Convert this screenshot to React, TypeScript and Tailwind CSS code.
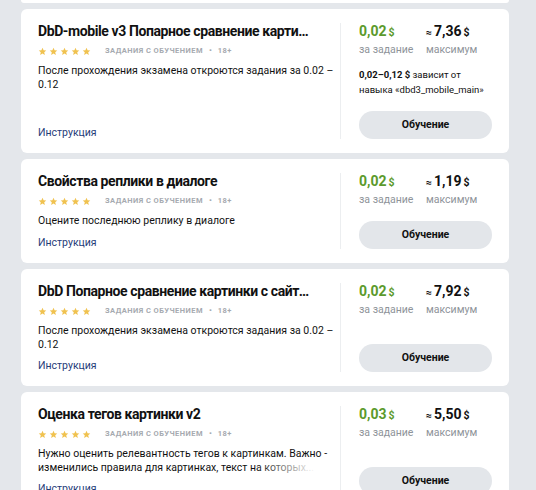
import React from "react";

type Task = {
  title: string;
  desc: string[];
  fade?: boolean;
  price: string;
  max: string;
  note?: boolean;
};

const tasks: Task[] = [
  {
    title: "DbD-mobile v3 Попарное сравнение картинок",
    desc: ["После прохождения экзамена откроются задания за 0.02 –", "0.12"],
    price: "0,02",
    max: "7,36",
    note: true,
  },
  {
    title: "Свойства реплики в диалоге",
    desc: ["Оцените последнюю реплику в диалоге"],
    price: "0,02",
    max: "1,19",
  },
  {
    title: "DbD Попарное сравнение картинки с сайтом",
    desc: ["После прохождения экзамена откроются задания за 0.02 –", "0.12"],
    price: "0,02",
    max: "7,92",
  },
  {
    title: "Оценка тегов картинки v2",
    desc: ["Нужно оценить релевантность тегов к картинкам. Важно -", "изменились правила для картинках, текст на которых..."],
    fade: true,
    price: "0,03",
    max: "5,50",
  },
];

function Stars() {
  return (
    <div className="flex gap-[2px]">
      {[0, 1, 2, 3, 4].map((i) => (
        <svg key={i} width="9" height="9" viewBox="0 0 24 24">
          <path
            d="M12 2l2.9 6.9 7.1.6-5.4 4.7 1.6 7L12 17.5 5.8 21.2l1.6-7L2 9.5l7.1-.6z"
            fill="#f0c24f"
          />
        </svg>
      ))}
    </div>
  );
}

function Card({ t }: { t: Task }) {
  return (
    <div className="flex bg-white rounded-[6px]">
      <div className="w-[319px] flex flex-col pl-[17px] pr-[16px] pt-[12px] pb-[13px]">
        <div className="w-[276px] text-[14px] leading-[20px] font-bold tracking-[-0.4px] text-[#111] truncate">
          {t.title}
        </div>
        <div className="flex items-center mt-[5px] h-[10px]">
          <Stars />
          <span className="ml-[14px] text-[7.5px] font-bold tracking-[0.45px] text-[#a6aab0]">
            ЗАДАНИЯ С ОБУЧЕНИЕМ
          </span>
          <span className="mx-[6px] text-[8px] font-bold text-[#a6aab0]">•</span>
          <span className="text-[7.5px] font-bold tracking-[0.4px] text-[#a6aab0]">18+</span>
        </div>
        <div className="mt-[8px] text-[10.5px] leading-[14px] text-[#111] relative">
          {t.desc.map((d, i) => (
            <div key={i} className="whitespace-nowrap">{d}</div>
          ))}
          {t.fade && (
            <div className="absolute right-[8px] bottom-0 h-[14px] w-[60px] bg-gradient-to-r from-white/0 to-white" />
          )}
        </div>
        <div className="mt-auto pt-[7px] text-[10.5px] leading-[14px] text-[#1f3b78]">Инструкция</div>
      </div>
      <div className="w-px my-[14px] bg-[#eceef0]" />
      <div className="flex-1 flex flex-col pl-[18px] pr-[17px] pt-[12px] pb-[14px]">
        <div className="flex">
          <div className="w-[67px]">
            <div className="flex items-baseline leading-[20px]">
              <span className="text-[14px] font-bold text-[#5b9a2c]">{t.price}</span>
              <span className="ml-[2px] text-[10.5px] font-bold text-[#5b9a2c]">$</span>
            </div>
            <div className="text-[10.5px] leading-[14px] text-[#8e9399]">за задание</div>
          </div>
          <div>
            <div className="flex items-baseline leading-[20px]">
              <span className="mr-[2px] text-[10.5px] font-bold text-[#111]">≈</span>
              <span className="text-[14px] font-bold text-[#111]">{t.max}</span>
              <span className="ml-[2px] text-[10.5px] font-bold text-[#111]">$</span>
            </div>
            <div className="text-[10.5px] leading-[14px] text-[#8e9399]">максимум</div>
          </div>
        </div>
        {t.note && (
          <div className="mt-[10px] text-[9.5px] leading-[15px] text-[#111]">
            <div>
              <span className="font-bold">0,02–0,12 $</span> зависит от
            </div>
            <div>навыка «dbd3_mobile_main»</div>
          </div>
        )}
        <div className="mt-auto pt-[14px]">
          <button className="h-[28px] w-[133px] rounded-full bg-[#e3e6ea] text-[10.5px] font-bold text-[#111]">
            Обучение
          </button>
        </div>
      </div>
    </div>
  );
}

export default function App() {
  return (
    <div
      className="min-h-screen bg-[#e4e7eb] pl-[21px] pr-[27px] pb-6"
      style={{ fontFamily: "Roboto, 'Noto Sans', sans-serif" }}
    >
      <div className="h-[3px] bg-white rounded-b-[6px]" />
      <div className="flex flex-col gap-[6px] mt-[6px]">
        {tasks.map((t, i) => (
          <Card key={i} t={t} />
        ))}
      </div>
    </div>
  );
}
